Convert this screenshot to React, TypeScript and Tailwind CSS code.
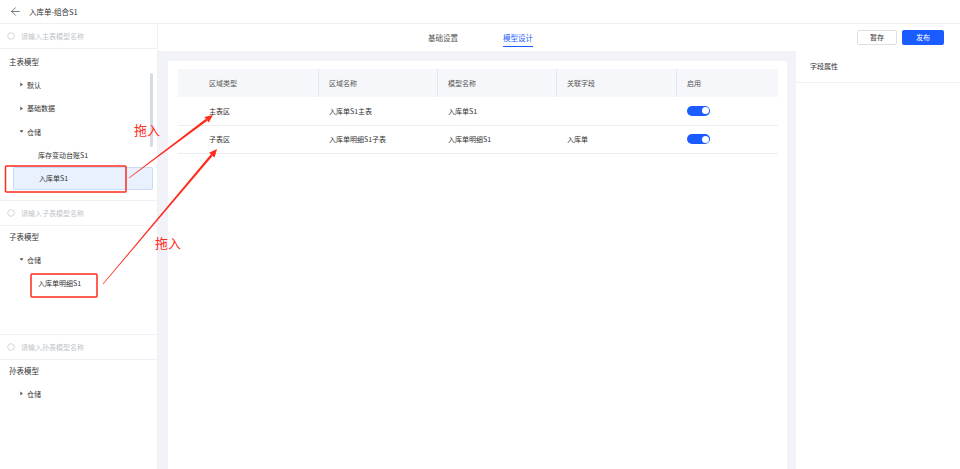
import { ArrowLeft } from "lucide-react";

const font = "font-['Noto_Sans_CJK_SC','Noto_Sans',sans-serif]";

function SearchBox({ placeholder }: { placeholder: string }) {
    return (
        <div className="h-[25px] flex items-center gap-[6px] pl-[7px] border-b border-[#eef0f4]">
            <svg width="8" height="8" viewBox="0 0 8 8">
                <circle cx="4" cy="4" r="3.3" fill="none" stroke="#c8ccd3" strokeWidth="0.8" />
            </svg>
            <span className="text-[7px] text-[#c0c4cc]">{placeholder}</span>
        </div>
    );
}

function Caret({ open }: { open?: boolean }) {
    return (
        <svg width="5" height="5" viewBox="0 0 5 5" className="mr-[3px]">
            {open ? <polygon points="0.5,1.3 4.5,1.3 2.5,3.8" fill="#555" /> : <polygon points="1.3,0.5 3.8,2.5 1.3,4.5" fill="#555" />}
        </svg>
    );
}

function TreeRow({ label, caret, open, leaf }: { label: string; caret?: boolean; open?: boolean; leaf?: boolean }) {
    return (
        <div className={`h-[23.5px] flex items-center text-[7px] text-[#333] ${leaf ? "pl-[38px]" : "pl-[19px]"}`}>
            {caret && <Caret open={open} />}
            <span>{label}</span>
        </div>
    );
}

function Toggle() {
    return (
        <div className="w-[23px] h-[10px] rounded-full bg-[#1a5cff] flex items-center justify-end pr-[1.5px]">
            <div className="w-[7px] h-[7px] rounded-full bg-white" />
        </div>
    );
}

const cols = ["w-[141px] pl-[31px]", "w-[119px] pl-[10px]", "w-[119px] pl-[10px]", "w-[120px] pl-[10px]", "flex-1 pl-[10px]"];

const rows = [
    ["主表区", "入库单S1主表", "入库单S1", ""],
    ["子表区", "入库单明细S1子表", "入库单明细S1", "入库单"],
];

export default function App() {
    return (
        <div className={`relative w-[960px] h-[469px] overflow-hidden bg-white flex flex-col ${font}`}>
            {/* top bar */}
            <div className="h-[24px] flex items-center gap-[7px] pl-[9px] border-b border-[#eef0f4]">
                <ArrowLeft size={13} strokeWidth={1.2} color="#333" />
                <span className="text-[7.5px] text-[#333]">入库单-组合S1</span>
            </div>

            <div className="flex-1 flex min-h-0">
                {/* left tree panel */}
                <div className="w-[158px] flex flex-col border-r border-[#eef0f4]">
                    <div className="h-[177px] relative flex flex-col border-b border-[#eef0f4]">
                        <SearchBox placeholder="请输入主表模型名称" />
                        <div className="pt-[2px]">
                            <div className="h-[22px] flex items-center pl-[9px] text-[7.5px] text-[#333]">主表模型</div>
                            <TreeRow label="默认" caret />
                            <TreeRow label="基础数据" caret />
                            <TreeRow label="仓储" caret open />
                            <TreeRow label="库存变动台账S1" leaf />
                            <div className="mx-[13px] mr-[4px] h-[23px] flex items-center pl-[25px] text-[7px] text-[#333] bg-[#e8f1fd] border border-[#c9dcf7] rounded-[2px]">
                                入库单S1
                            </div>
                        </div>
                        <div className="absolute left-[150px] top-[49px] w-[3px] h-[74px] rounded-full bg-[#d6dae1]" />
                    </div>
                    <div className="h-[134px] flex flex-col border-b border-[#eef0f4]">
                        <SearchBox placeholder="请输入子表模型名称" />
                        <div className="h-[22px] flex items-center pl-[9px] text-[7.5px] text-[#333]">子表模型</div>
                        <TreeRow label="仓储" caret open />
                        <TreeRow label="入库单明细S1" leaf />
                    </div>
                    <div className="flex-1 flex flex-col">
                        <SearchBox placeholder="请输入孙表模型名称" />
                        <div className="h-[22px] flex items-center pl-[9px] text-[7.5px] text-[#333]">孙表模型</div>
                        <TreeRow label="仓储" caret />
                    </div>
                </div>

                {/* center + right */}
                <div className="flex-1 flex flex-col">
                    <div className="h-[27px] flex">
                        <div className="w-[638px] flex justify-center gap-[45px] pl-[7px]">
                            <div className="h-full flex items-center text-[7.5px] text-[#555]">基础设置</div>
                            <div className="h-full flex flex-col items-center justify-center relative text-[7.5px] text-[#1a5cff]">
                                模型设计
                                <div className="absolute bottom-[4px] left-0 right-0 h-[1.5px] bg-[#1a5cff]" />
                            </div>
                        </div>
                        <div className="flex-1 flex items-center justify-end gap-[5px] pr-[16px]">
                            <button className="w-[40px] h-[15px] border border-[#dcdfe6] rounded-[2px] text-[7px] text-[#333] bg-white">暂存</button>
                            <button className="w-[42px] h-[15px] rounded-[2px] text-[7px] text-white bg-[#1a5cff]">发布</button>
                        </div>
                    </div>

                    <div className="flex-1 flex min-h-0">
                        <div className="w-[638px] bg-[#f2f3f8] pt-[10px] pl-[10px] pr-[9px]">
                            <div className="h-full bg-white pt-[8px] pl-[10px] pr-[9px]">
                                <div className="h-[28px] flex bg-[#f5f7fa] text-[7px] text-[#555]">
                                    {["区域类型", "区域名称", "模型名称", "关联字段", "启用"].map((h, i) => (
                                        <div key={h} className={`${cols[i]} flex items-center ${i < 4 ? "border-r border-[#e3e6ec]" : ""}`}>
                                            {h}
                                        </div>
                                    ))}
                                </div>
                                {rows.map((r) => (
                                    <div key={r[0]} className="h-[28.5px] flex border-b border-[#eceef2] text-[7px] text-[#333]">
                                        {r.map((c, i) => (
                                            <div key={i} className={`${cols[i]} flex items-center`}>{c}</div>
                                        ))}
                                        <div className={`${cols[4]} flex items-center`}>
                                            <Toggle />
                                        </div>
                                    </div>
                                ))}
                            </div>
                        </div>
                        <div className="flex-1 flex flex-col">
                            <div className="h-[32px] flex items-center pl-[14px] border-b border-[#eef0f4] text-[7px] text-[#333]">字段属性</div>
                        </div>
                    </div>
                </div>
            </div>

            {/* annotations */}
            <span className="absolute left-[134px] top-[121px] text-[13px] leading-[18px] text-[#ff2a1a]">拖入</span>
            <span className="absolute left-[155px] top-[234px] text-[13px] leading-[18px] text-[#ff2a1a]">拖入</span>
            <svg className="absolute inset-0 pointer-events-none" width="960" height="469">
                <rect x="5.5" y="166" width="120.5" height="26" rx="1" fill="none" stroke="#ff2a1a" strokeWidth="1.5" />
                <rect x="31" y="274" width="66" height="23" rx="1" fill="none" stroke="#ff2a1a" strokeWidth="1.5" />
                <polygon points="129.18,178.24 207.32,120.76 205.88,118.84 128.82,177.76" fill="#ff2a1a" />
                <polygon points="213,115 208.7,122.6 204.5,117" fill="#ff2a1a" />
                <polygon points="103.23,284.19 212.72,155.87 210.88,154.33 102.77,283.81" fill="#ff2a1a" />
                <polygon points="217,149 214.5,157.4 209.1,152.8" fill="#ff2a1a" />
            </svg>
        </div>
    );
}
